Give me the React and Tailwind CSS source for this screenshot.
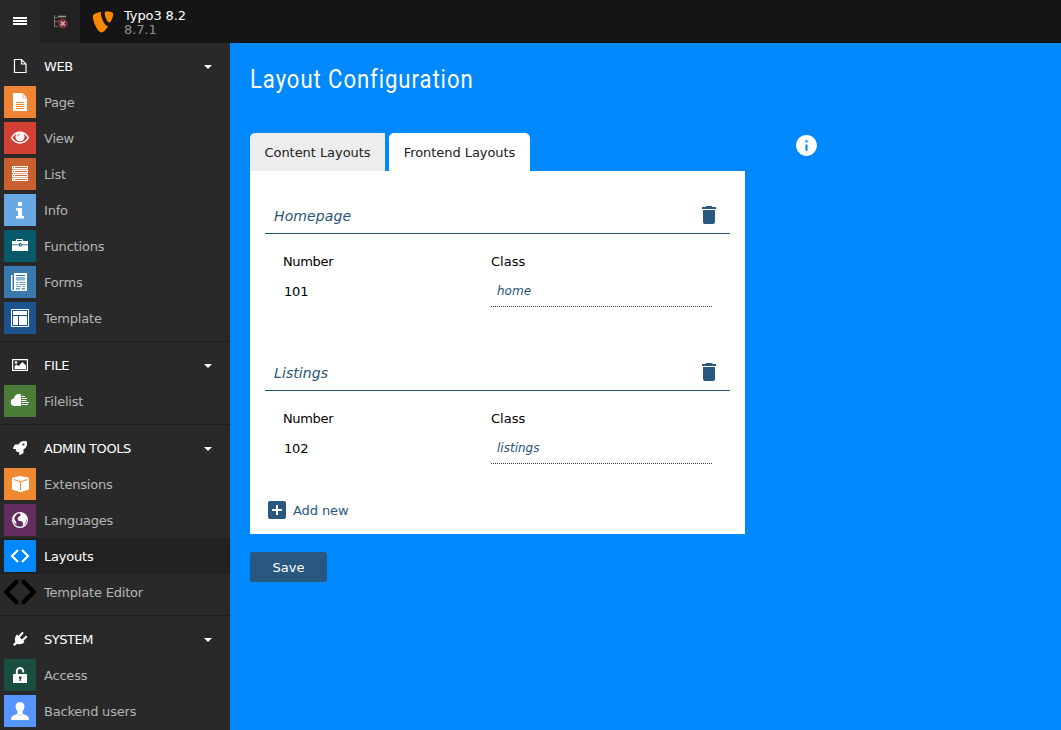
import { FaRocket, FaTypo3 } from "react-icons/fa";
import { MdDelete, MdAddBox, MdInfo } from "react-icons/md";

const drawings = {
  page: (
    <>
      <path d="M9 7h10l4 5v13H9z" />
      <path d="M19 7v5h4" fill="none" stroke="#e0a27a" strokeWidth="0.8" />
      <path d="M12 17.5h8M12 19.5h8M12 21.5h8M12 23.5h8" transform="translate(0 -1)" stroke="#ef8434" strokeWidth="1" />
    </>
  ),
  eye: (
    <>
      <path d="M7.6 15.7C9.700 12.200 12.700 10.300 16 10.300s6.300 1.900 8.400 5.400c-2.100 3.500-5.100 5.300-8.400 5.300s-6.300-1.800-8.400-5.300z" fill="none" stroke="#fff" strokeWidth="1.500" />
      <circle cx="16" cy="14.800" r="4.500" />
      <path d="M13.700 14.300c0-1.200.8-2 2-2" fill="none" stroke="#d13f35" strokeWidth="0.900" />
    </>
  ),
  list: (
    <>
      <path d="M8 8h16v3H8zM8 12h16v3H8zM8 16h16v3H8zM8 20h16v3H8z" />
      <path d="M8.500 11.500h15M8.500 15.500h15M8.500 19.500h15" stroke="#fff" strokeWidth="0.500" />
      <path d="M11 9.500h12M11 13.500h12M11 17.500h12M11 21.500h12M9 9.500h1M9 13.500h1M9 17.500h1M9 21.500h1" stroke="#c8602f" strokeWidth="0.900" />
    </>
  ),
  info: <path d="M14 8h4v4h-4zM12 14h6v8h2v2.500h-8V22h2v-5.500h-2z" />,
  briefcase: (
    <>
      <path d="M12.500 11.500V9.500h6v2" fill="none" stroke="#fff" strokeWidth="1" />
      <path d="M8 11h16v3.500H8zM8 15.300h16V21H8z" />
      <path d="M15.500 13.500h1.500v2.500h-1.500z" fill="#fff" stroke="#08596a" strokeWidth="0.900" />
    </>
  ),
  forms: (
    <>
      <path d="M10 7h13v18H8.500L7 23.500V9h1.500v14.500l1.500.5z" />
      <path d="M12 9.500h9" stroke="#3a79ad" strokeWidth="1" />
      <path d="M12 11h9v3.500h-9z" fill="#8fb7da" />
      <path d="M12 16.500h2M15.500 16.500H21M12 18.500h2M15.500 18.500H21M12 20.500h5M18.500 20.500H21" stroke="#6b9cc5" strokeWidth="1" />
      <path d="M12 22h4v1.500h-4zM17.500 22H21v1.500h-3.500z" fill="#6b9cc5" />
    </>
  ),
  template: (
    <>
      <path d="M7.500 7.500h17v17h-17z" fill="none" stroke="#fff" strokeWidth="1" />
      <path d="M9 9h14v4H9zM9 14h5v9H9zM15 14h8v9h-8z" />
    </>
  ),
  cloud: (
    <>
      <path d="M17 21h-6.700a3.800 3.800 0 0 1-.5-7.500C10.200 10.800 12.400 9 14.800 9c.9 0 1.600.2 2.200.6z" />
      <path d="M17.500 11.500h3.500M17.500 13.500h5.500M17.500 15.500h5M17.500 17.500h7.500M17.500 19.500h6.500" stroke="#fff" strokeWidth="1" />
    </>
  ),
  cube: (
    <>
      <path d="M16.500 8L25 9.800v11.800l-8.500 2.600L8 21.600V9.800z" />
      <path d="M9.500 11.500l7 2.300 7-2.300M16.500 13.800V22" fill="none" stroke="#ef8a30" strokeWidth="1" />
    </>
  ),
  globe: (
    <>
      <circle cx="16" cy="16" r="7.400" fill="none" stroke="#fff" strokeWidth="1.200" />
      <path d="M16.500 9l3 .3 2.800 2.500 1 3-1 1-.5 3-2 2.800-1 .7.200-3.500-1.500-1.500-3-.5-1-2 1.500-2.500 2-.5-1-1.500z" />
      <path d="M9 12.500l2.500-3 2-.5-1.500 2.500-1.500 1.500v2.500l1.500 2 .5 3-2-1.500L9 17z" />
    </>
  ),
  code: <path d="M14 10l-6 6 6 6M18 10l6 6-6 6" fill="none" stroke="#fff" strokeWidth="2.200" />,
  codeLarge: (
    <path d="M12.500 5.800L2.300 16l10.200 10.200M19.500 5.800L29.700 16 19.500 26.200" fill="none" stroke="#000" strokeWidth="4.200" strokeLinecap="round" />
  ),
  lock: (
    <>
      <path d="M12.800 16v-3.500a3.200 3.200 0 0 1 6.400-.5v1.500" fill="none" stroke="#fff" strokeWidth="2" />
      <path d="M9 15h14v9H9z" />
      <path d="M15 17.500h2.500v2l-.6.500v2h-1.300v-2l-.6-.5z" fill="#194d40" />
    </>
  ),
  user: (
    <>
      <path d="M16 7c2.800 0 4.400 1.800 4.400 4.400 0 2-.8 3.700-1.900 4.800v2.300c1.500 1.300 4.500 1.300 6 3.700L25 25H7l.5-2.800c1.500-2.400 4.500-2.400 6-3.700v-2.300c-1.100-1.100-1.900-2.800-1.900-4.800C11.600 8.800 13.200 7 16 7z" />
      <path d="M13 19l3 1.800 3-1.800" fill="none" stroke="#b3ccff" strokeWidth="0.800" />
    </>
  ),
  file: (
    <path d="M10.500 9.500h7l4.500 4.500v8.500H10.500zM17.500 9.500v4.500H22" fill="none" stroke="#fff" strokeWidth="1.200" />
  ),
  image: (
    <>
      <path d="M8.600 10.600h14.800v10.800H8.600z" fill="none" stroke="#fff" strokeWidth="1.200" />
      <path d="M10.500 20v-3l2-1.500 2 1.500 4-4 3.500 3.500V20z" />
      <circle cx="12" cy="13.500" r="1.300" />
    </>
  ),
  plug: (
    <>
      <path d="M13 11.500l7.500 7.500c-2.200 2.300-5 2.800-7.300 1.700L10.500 23 9 21.500l2.400-2.500c-1.100-2.500-.5-5.300 1.600-7.500z" />
      <path d="M15 13.700l3.500-3.700M18.500 17.200l3.700-3.500" stroke="#fff" strokeWidth="2" strokeLinecap="round" />
    </>
  ),
};

const groups = [
  {
    title: "WEB",
    icon: "file",
    items: [
      ["Page", "page", "bg-[#ef8434]"],
      ["View", "eye", "bg-[#d13f35]"],
      ["List", "list", "bg-[#c8602f]"],
      ["Info", "info", "bg-[#68a9e3]"],
      ["Functions", "briefcase", "bg-[#08596a]"],
      ["Forms", "forms", "bg-[#3a79ad]"],
      ["Template", "template", "bg-[#1c538f]"],
    ],
  },
  { title: "FILE", icon: "image", items: [["Filelist", "cloud", "bg-[#4b7d38]"]] },
  {
    title: "ADMIN TOOLS",
    icon: "rocket",
    items: [
      ["Extensions", "cube", "bg-[#ef8a30]"],
      ["Languages", "globe", "bg-[#642d60]"],
      ["Layouts", "code", "bg-[#0088ff]"],
      ["Template Editor", "codeLarge", ""],
    ],
  },
  {
    title: "SYSTEM",
    icon: "plug",
    items: [
      ["Access", "lock", "bg-[#194d40]"],
      ["Backend users", "user", "bg-[#5694ff]"],
    ],
  },
];

function Glyph({ name }) {
  if (name === "rocket") return <FaRocket size={14} />;
  return (
    <svg width="32" height="32" viewBox="0 0 32 32" fill="#fff">
      {drawings[name]}
    </svg>
  );
}

function Sidebar() {
  return (
    <nav className="w-[230px] shrink-0 overflow-hidden bg-[#292929] tracking-[-0.2px]">
      {groups.map((g) => (
        <section key={g.title} className="border-b border-[#1e1e1e] py-[5px]">
          <div className="flex h-9 items-center pl-1 text-white">
            <span className="flex size-8 items-center justify-center">
              <Glyph name={g.icon} />
            </span>
            <span className="ml-2 flex-1 pt-0.5 tracking-[-0.45px]">{g.title}</span>
            <svg width="8" height="4" viewBox="0 0 8 4" className="mt-0.5 mr-[18px]" fill="#fff">
              <path d="M0 0h8L4 4z" />
            </svg>
          </div>
          {g.items.map(([label, icon, color]) => (
            <div
              key={label}
              className={`flex h-9 items-center pl-1 ${label === "Layouts" ? "bg-[#212121] text-white" : "text-[#b5b5b5]"}`}
            >
              <span className={`size-8 ${color}`}>
                <Glyph name={icon} />
              </span>
              <span className="ml-2 pt-0.5">{label}</span>
            </div>
          ))}
        </section>
      ))}
    </nav>
  );
}

function LayoutEntry({ name, number, cls }) {
  return (
    <section className="h-[157px]">
      <header className="flex h-[38px] items-center justify-between border-b border-[#285577] pr-[9px] pl-[9px] text-[#285577]">
        <span className="pt-[3px] text-[14px] tracking-[0.1px] italic">{name}</span>
        <MdDelete size={24} className="text-[#28587f]" />
      </header>
      <div className="flex pt-[18px] pl-[18px] text-black">
        <div className="w-[208px] tracking-[-0.35px]">
          <div className="h-5 leading-5">Number</div>
          <div className="mt-2.5 pl-px leading-5 tracking-[-0.2px]">{number}</div>
        </div>
        <div className="w-[221px]">
          <div className="h-5 leading-5">Class</div>
          <div className="mt-1 h-[31px] border-b border-dotted border-[#333f50] pl-1.5 text-[12px] leading-[30px] text-[#285577] italic">
            {cls}
          </div>
        </div>
      </div>
    </section>
  );
}

export default function App() {
  return (
    <div className="flex h-[730px] w-[1061px] flex-col overflow-hidden font-['DejaVu_Sans',sans-serif] text-[13px]">
      <header className="flex h-[43px] shrink-0 bg-[#151515]">
        <div className="flex w-10 items-center justify-center bg-[#292929] pb-px">
          <svg width="14" height="8" viewBox="0 0 14 8" fill="#fff">
            <path d="M0 0h14v2H0zM0 3h14v2H0zM0 6h14v2H0z" />
          </svg>
        </div>
        <div className="flex w-10 items-center justify-center bg-[#212121] pb-px">
          <svg width="16" height="16" viewBox="0 0 16 16" fill="none">
            <path d="M2.500 2v12M2.500 4.500h3M2.500 8.500h3M2.500 13.500h3" stroke="#777" />
            <path d="M6 3.500h8" stroke="#999" strokeWidth="1.600" />
            <path d="M6 7.500h5" stroke="#777" />
            <circle cx="10.800" cy="10.500" r="5" fill="#792d34" />
            <path d="M8.700 8.400l4.200 4.200M12.900 8.400l-4.200 4.200" stroke="#c6a9ad" strokeWidth="1.500" />
          </svg>
        </div>
        <div className="flex items-center pl-[11px]">
          <FaTypo3 size={24} className="text-[#ff8700]" />
          <div className="ml-[9px] pt-0.5 leading-[14px] tracking-[-0.1px]">
            <div className="text-white">Typo3 8.2</div>
            <div className="text-[#8f8f8f]">8.7.1</div>
          </div>
        </div>
      </header>
      <div className="flex min-h-0 flex-1">
        <Sidebar />
        <main className="flex-1 bg-[#0088ff] pt-5 pl-5">
          <h1 className="h-[70px] origin-left scale-x-[0.85] font-['Roboto',sans-serif] text-[26px] leading-8 tracking-[1.1px] whitespace-nowrap text-white">
            Layout Configuration
          </h1>
          <div className="flex items-start">
            <div className="w-[495px]">
              <div className="flex gap-1 tracking-[-0.05px] text-[#212121]">
                <div className="h-[38px] w-[135px] rounded-tl-[5px] bg-[#ededed] text-center leading-10">Content Layouts</div>
                <div className="h-[38px] w-[141px] rounded-t-[5px] bg-white text-center leading-10">Frontend Layouts</div>
              </div>
              <div className="h-[363px] bg-white px-[15px] pt-[25px]">
                <LayoutEntry name="Homepage" number="101" cls="home" />
                <LayoutEntry name="Listings" number="102" cls="listings" />
                <div className="flex h-0 items-center gap-1 text-[#28587f]">
                  <MdAddBox size={24} />
                  <span className="pt-0.5 tracking-[-0.1px]">Add new</span>
                </div>
              </div>
              <div className="mt-[18px] h-[30px] w-[77px] rounded-[3px] bg-[#28587f] text-center leading-8 text-white">Save</div>
            </div>
            <MdInfo size={25} className="ml-[49px] text-white" />
          </div>
        </main>
      </div>
    </div>
  );
}
